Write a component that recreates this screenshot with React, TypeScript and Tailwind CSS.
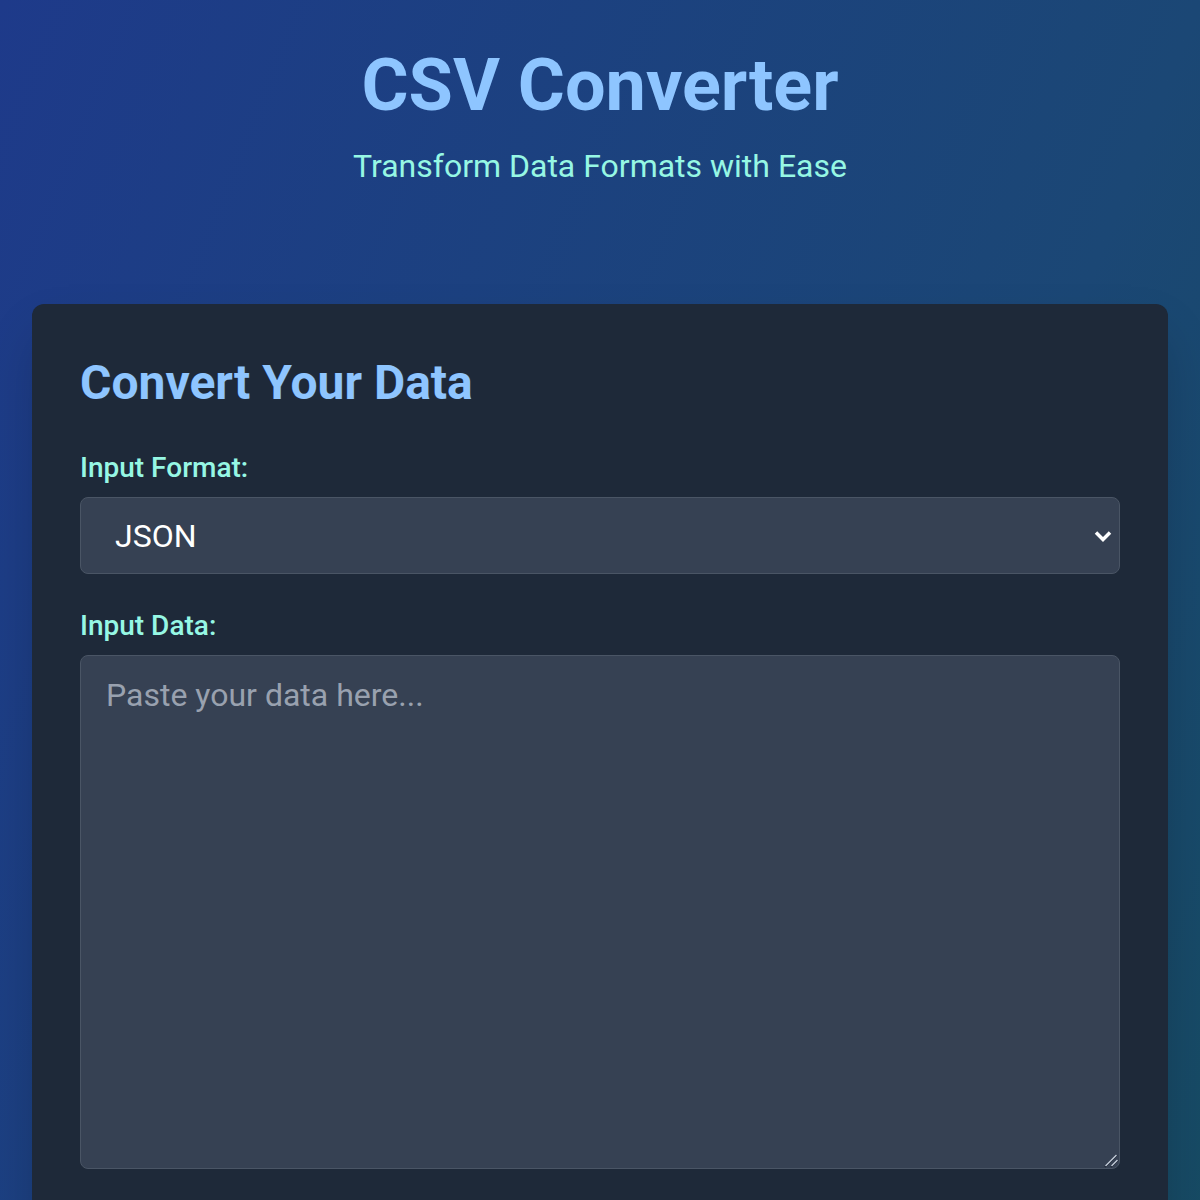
import { useState } from 'react';

const Chevron = () => (
  <svg
    className="pointer-events-none absolute right-[7px] top-1/2 -translate-y-1/2"
    width="20"
    height="20"
    viewBox="0 0 20 20"
    fill="none"
  >
    <polyline points="3,6.5 10,13.5 17,6.5" stroke="#ffffff" strokeWidth="3.5" />
  </svg>
);

const ResizeGrip = () => (
  <svg
    className="pointer-events-none absolute right-[1px] bottom-[1px]"
    width="16"
    height="16"
    viewBox="0 0 16 16"
    fill="none"
  >
    <line x1="2" y1="15" x2="14" y2="3" stroke="#111827" strokeWidth="1.5" />
    <line x1="2.5" y1="14" x2="13.5" y2="3" stroke="#cbd5e1" strokeWidth="1.3" />
    <line x1="8" y1="15" x2="15" y2="8" stroke="#111827" strokeWidth="1.5" />
    <line x1="8.5" y1="14" x2="14.5" y2="8" stroke="#cbd5e1" strokeWidth="1.3" />
  </svg>
);

const App = () => {
  const [inputFormat, setInputFormat] = useState('json');
  const [outputFormat, setOutputFormat] = useState('csv');
  const [inputData, setInputData] = useState('');

  return (
    <div className="min-h-[3000px] bg-gradient-to-br from-[#1e3a8a] via-[#1b4775] to-[#134e4a] px-8 pt-[50px] pb-16 font-['Roboto',sans-serif]">
      <header className="text-center">
        <h1 className="text-[72px] leading-[72px] font-bold text-blue-300 mb-[24px]">CSV Converter</h1>
        <p className="text-[32px] leading-[40px] text-teal-200">Transform Data Formats with Ease</p>
      </header>

      <main className="mt-[118px] bg-gray-800 rounded-xl shadow-2xl px-12 pt-[55px] pb-12">
        <h2 className="text-[48px] leading-[48px] font-bold text-blue-300 mb-[43px]">Convert Your Data</h2>

        <label className="block text-[28px] leading-[36px] font-medium text-teal-200 mb-[11px]">Input Format:</label>
        <div className="relative mb-[34px]">
          <select
            value={inputFormat}
            onChange={(e) => setInputFormat(e.target.value)}
            className="block w-full h-[77px] appearance-none bg-gray-700 border border-gray-600 rounded-lg pl-[34px] pr-10 text-[32px] text-white"
          >
            <option value="json">JSON</option>
            <option value="csv">CSV</option>
            <option value="xml">XML</option>
          </select>
          <Chevron />
        </div>

        <label className="block text-[28px] leading-[36px] font-medium text-teal-200 mb-[11px]">Input Data:</label>
        <div className="relative mb-[34px]">
          <textarea
            value={inputData}
            onChange={(e) => setInputData(e.target.value)}
            placeholder="Paste your data here..."
            className="block w-full h-[514px] resize-none bg-gray-700 border border-gray-600 rounded-lg px-[25px] py-5 text-[32px] leading-[1.2] text-white placeholder-gray-400"
          />
          <ResizeGrip />
        </div>

        <label className="block text-[28px] leading-[36px] font-medium text-teal-200 mb-[11px]">Output Format:</label>
        <div className="relative mb-[34px]">
          <select
            value={outputFormat}
            onChange={(e) => setOutputFormat(e.target.value)}
            className="block w-full h-[77px] appearance-none bg-gray-700 border border-gray-600 rounded-lg pl-[34px] pr-10 text-[32px] text-white"
          >
            <option value="csv">CSV</option>
            <option value="json">JSON</option>
            <option value="xml">XML</option>
          </select>
          <Chevron />
        </div>

        <button className="w-full bg-blue-500 text-white text-[32px] font-bold py-5 rounded-lg hover:bg-blue-600 transition mb-[34px]">
          Convert
        </button>

        <label className="block text-[28px] leading-[36px] font-medium text-teal-200 mb-[11px]">Output Data:</label>
        <textarea
          readOnly
          placeholder="Converted data will appear here..."
          className="block w-full h-[514px] resize-none bg-gray-700 border border-gray-600 rounded-lg px-[25px] py-5 text-[32px] leading-[1.2] text-white placeholder-gray-400"
        />
      </main>
    </div>
  );
};

export default App;
